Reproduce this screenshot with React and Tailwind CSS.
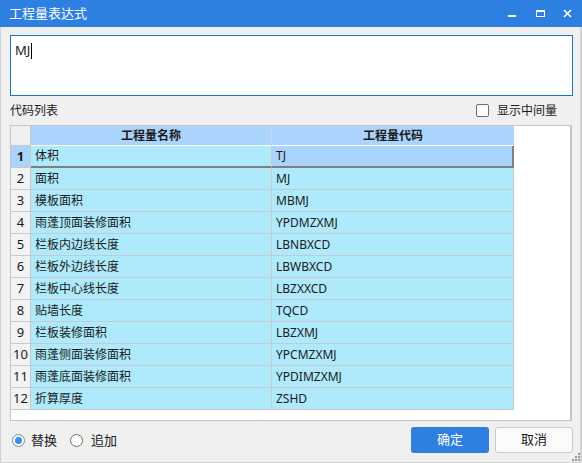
import React from "react";

const rows = [
  ["体积", "TJ"],
  ["面积", "MJ"],
  ["模板面积", "MBMJ"],
  ["雨蓬顶面装修面积", "YPDMZXMJ"],
  ["栏板内边线长度", "LBNBXCD"],
  ["栏板外边线长度", "LBWBXCD"],
  ["栏板中心线长度", "LBZXXCD"],
  ["贴墙长度", "TQCD"],
  ["栏板装修面积", "LBZXMJ"],
  ["雨蓬侧面装修面积", "YPCMZXMJ"],
  ["雨蓬底面装修面积", "YPDIMZXMJ"],
  ["折算厚度", "ZSHD"],
];

const font = { fontFamily: "'Noto Sans', 'Noto Sans CJK SC', sans-serif" };

export default function App() {
  return (
    <div
      className="relative w-[582px] h-[463px] flex flex-col bg-[#f0f0f0] text-[12px] text-[#1a1a1a] overflow-hidden"
      style={font}
    >
      {/* Title bar */}
      <div className="h-[27px] shrink-0 bg-[#2e80e0] flex items-center pl-[9px] text-white">
        <span className="text-[13px] leading-none">工程量表达式</span>
        <div className="ml-auto flex items-center h-full">
          <div className="w-[28px] h-full flex items-center justify-center">
            <div className="w-[8px] h-[2px] bg-white mt-[4px]" />
          </div>
          <div className="w-[28px] h-full flex items-center justify-center">
            <div className="w-[9px] h-[7px] border border-white border-t-2" />
          </div>
          <div className="w-[28px] h-full flex items-center justify-center pr-[2px]">
            <svg width="9" height="9" viewBox="0 0 9 9">
              <path d="M1 1 L8 8 M8 1 L1 8" stroke="white" strokeWidth="1.6" />
            </svg>
          </div>
        </div>
      </div>

      {/* Body */}
      <div className="flex-1 flex flex-col border-l border-b border-r-2 border-[#d3d3d3] pl-[9px] pr-[7px] pb-[9px]">
        {/* textarea */}
        <div className="mt-[8px] h-[61px] shrink-0 bg-white border border-[#1a74d4] pl-[4px] pt-[6px]">
          <div className="flex items-center h-[18px] text-[13px]">
            <span>MJ</span>
            <span className="inline-block w-[1px] h-[16px] bg-black ml-[1px]" />
          </div>
        </div>

        {/* label row */}
        <div className="h-[29px] shrink-0 flex items-center pr-[16px]">
          <span>代码列表</span>
          <div className="ml-auto flex items-center gap-[8px]">
            <div className="w-[13px] h-[13px] bg-white border border-[#6e6e6e] rounded-[2px]" />
            <span>显示中间量</span>
          </div>
        </div>

        {/* grid */}
        <div className="h-[296px] shrink-0 mr-[1px] bg-white border border-[#c6c6c6] border-r-2 flex flex-col">
          {/* header */}
          <div className="flex h-[20px] shrink-0">
            <div className="w-[20px] bg-[#eff0f2] border-r border-b border-[#c6c9cd]" />
            <div className="w-[241px] bg-[#aad4fb] border-r border-b border-r-[#c6d9ee] border-b-white flex items-center justify-center font-bold">
              工程量名称
            </div>
            <div className="w-[242px] bg-[#aad4fb] border-b border-white flex items-center justify-center font-bold">
              工程量代码
            </div>
          </div>
          {rows.map(([name, code], i) => {
            const sel = i === 0;
            return (
              <div key={i} className="flex h-[22px] shrink-0">
                <div
                  className={
                    sel
                      ? "w-[20px] bg-[#aad4fb] border-r border-b border-[#c6c9cd] flex items-center justify-center font-bold text-[13px]"
                      : "w-[20px] bg-[#f3f3f3] border-r border-b border-[#c6c9cd] flex items-center justify-center text-[13px]"
                  }
                >
                  {i + 1}
                </div>
                <div
                  className={
                    sel
                      ? "w-[241px] bg-[#aeeafb] border-r border-[#c6c9cd] border-b-2 border-b-[#7f7f7f] flex items-center pl-[4px]"
                      : "w-[241px] bg-[#aeeafb] border-r border-b border-[#c6c9cd] flex items-center pl-[4px]"
                  }
                >
                  {name}
                </div>
                <div
                  className={
                    sel
                      ? "w-[242px] bg-[#aad4fb] border-r-2 border-b-2 border-[#7f7f7f] flex items-center pl-[4px]"
                      : "w-[242px] bg-[#aeeafb] border-r border-b border-[#c6c9cd] flex items-center pl-[4px]"
                  }
                >
                  {code}
                </div>
              </div>
            );
          })}
        </div>

        {/* bottom row */}
        <div className="mt-[6px] h-[26px] shrink-0 flex items-center">
          <div className="flex items-center gap-[6px] ml-[2px] mt-[1px]">
            <div className="w-[13px] h-[13px] rounded-full bg-white border border-[#7a8a9a] flex items-center justify-center">
              <div className="w-[7px] h-[7px] rounded-full bg-[#3c8ff0]" />
            </div>
            <span className="text-[13px]">替换</span>
          </div>
          <div className="flex items-center gap-[8px] ml-[13px] mt-[1px]">
            <div className="w-[13px] h-[13px] rounded-full bg-white border border-[#6e6e6e]" />
            <span className="text-[13px]">追加</span>
          </div>
          <div className="ml-auto flex gap-[6px]">
            <div className="w-[78px] h-[26px] rounded-[3px] bg-[#2e7fe0] text-white flex items-center justify-center text-[13px]">
              确定
            </div>
            <div className="w-[78px] h-[26px] rounded-[3px] bg-[#fbfbfb] border border-[#c8ccd2] flex items-center justify-center text-[13px]">
              取消
            </div>
          </div>
        </div>
      </div>

      {/* resize grip */}
      <svg className="absolute right-[2px] bottom-[2px]" width="8" height="8" viewBox="0 0 8 8">
        <rect x="6" y="0" width="2" height="2" fill="#9a9a9a" />
        <rect x="3" y="3" width="2" height="2" fill="#9a9a9a" />
        <rect x="6" y="3" width="2" height="2" fill="#9a9a9a" />
        <rect x="0" y="6" width="2" height="2" fill="#9a9a9a" />
        <rect x="3" y="6" width="2" height="2" fill="#9a9a9a" />
        <rect x="6" y="6" width="2" height="2" fill="#9a9a9a" />
      </svg>
    </div>
  );
}
